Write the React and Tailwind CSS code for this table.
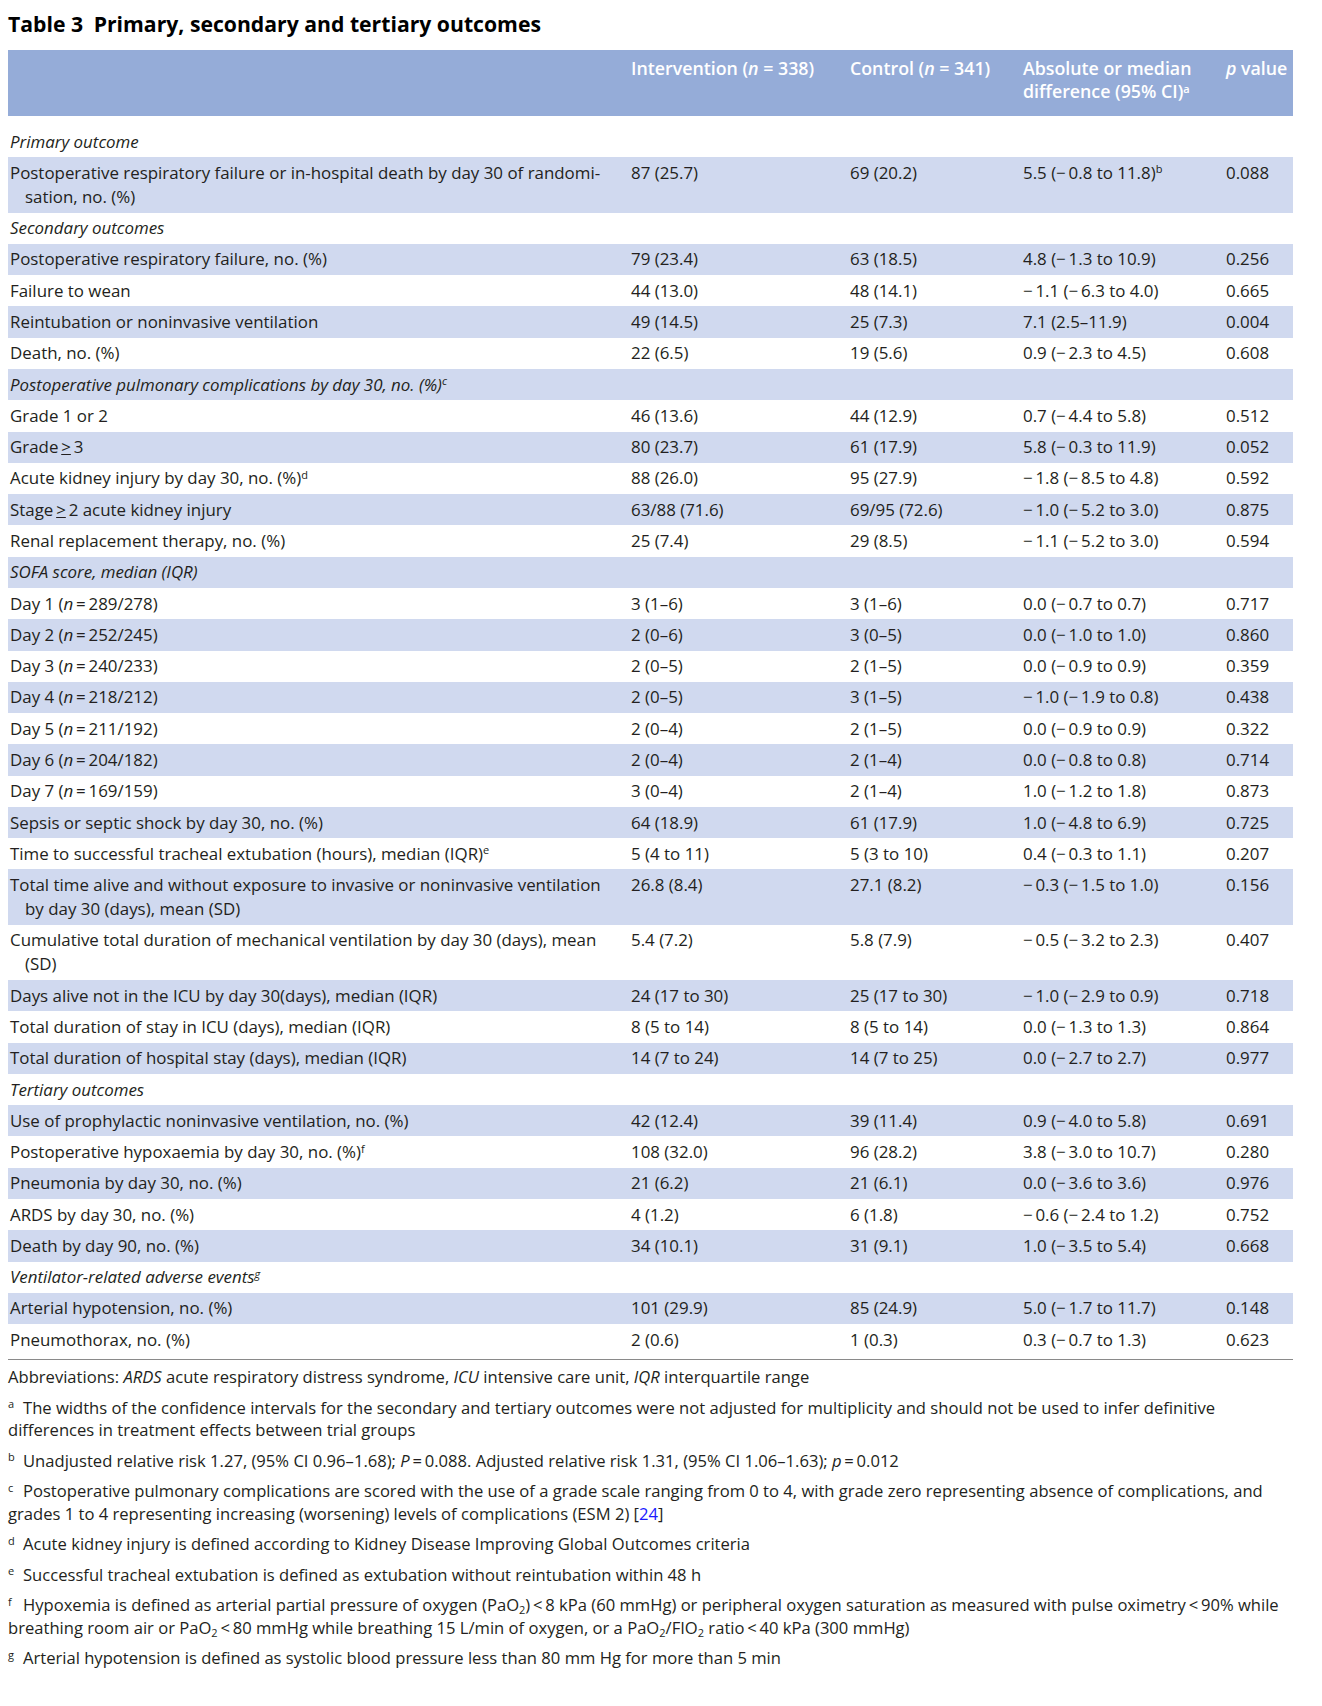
import React from "react";

const m = (s) => s.replace(/−/g, "−\u2009");

const Sup = ({ children }) => <sup className="text-[11px]">{children}</sup>;
const Sub = ({ children }) => <sub className="text-[11px]">{children}</sub>;
const N = ({ v }) => (
  <>
    (<i>n</i>{"\u2009=\u2009"}{v})
  </>
);

// [label, intervention, control, difference, p] ; section rows have only a label
const rows = [
  { section: "Primary outcome" },
  {
    lines: ["Postoperative respiratory failure or in-hospital death by day 30 of randomi-", "sation, no. (%)"],
    cells: ["87 (25.7)", "69 (20.2)", <>{m("5.5 (−0.8 to 11.8)")}<Sup>b</Sup></>, "0.088"],
  },
  { section: "Secondary outcomes" },
  { label: "Postoperative respiratory failure, no. (%)", cells: ["79 (23.4)", "63 (18.5)", "4.8 (−1.3 to 10.9)", "0.256"] },
  { label: "Failure to wean", cells: ["44 (13.0)", "48 (14.1)", "−1.1 (−6.3 to 4.0)", "0.665"] },
  { label: "Reintubation or noninvasive ventilation", cells: ["49 (14.5)", "25 (7.3)", "7.1 (2.5–11.9)", "0.004"] },
  { label: "Death, no. (%)", cells: ["22 (6.5)", "19 (5.6)", "0.9 (−2.3 to 4.5)", "0.608"] },
  { section: <>Postoperative pulmonary complications by day 30, no. (%)<Sup>c</Sup></> },
  { label: "Grade 1 or 2", cells: ["46 (13.6)", "44 (12.9)", "0.7 (−4.4 to 5.8)", "0.512"] },
  { label: <>Grade{"\u2009"}<u>&gt;</u>{"\u2009"}3</>, cells: ["80 (23.7)", "61 (17.9)", "5.8 (−0.3 to 11.9)", "0.052"] },
  { label: <>Acute kidney injury by day 30, no. (%)<Sup>d</Sup></>, cells: ["88 (26.0)", "95 (27.9)", "−1.8 (−8.5 to 4.8)", "0.592"] },
  { label: <>Stage{"\u2009"}<u>&gt;</u>{"\u2009"}2 acute kidney injury</>, cells: ["63/88 (71.6)", "69/95 (72.6)", "−1.0 (−5.2 to 3.0)", "0.875"] },
  { label: "Renal replacement therapy, no. (%)", cells: ["25 (7.4)", "29 (8.5)", "−1.1 (−5.2 to 3.0)", "0.594"] },
  { section: "SOFA score, median (IQR)" },
  { label: <>Day 1 <N v="289/278" /></>, cells: ["3 (1–6)", "3 (1–6)", "0.0 (−0.7 to 0.7)", "0.717"] },
  { label: <>Day 2 <N v="252/245" /></>, cells: ["2 (0–6)", "3 (0–5)", "0.0 (−1.0 to 1.0)", "0.860"] },
  { label: <>Day 3 <N v="240/233" /></>, cells: ["2 (0–5)", "2 (1–5)", "0.0 (−0.9 to 0.9)", "0.359"] },
  { label: <>Day 4 <N v="218/212" /></>, cells: ["2 (0–5)", "3 (1–5)", "−1.0 (−1.9 to 0.8)", "0.438"] },
  { label: <>Day 5 <N v="211/192" /></>, cells: ["2 (0–4)", "2 (1–5)", "0.0 (−0.9 to 0.9)", "0.322"] },
  { label: <>Day 6 <N v="204/182" /></>, cells: ["2 (0–4)", "2 (1–4)", "0.0 (−0.8 to 0.8)", "0.714"] },
  { label: <>Day 7 <N v="169/159" /></>, cells: ["3 (0–4)", "2 (1–4)", "1.0 (−1.2 to 1.8)", "0.873"] },
  { label: "Sepsis or septic shock by day 30, no. (%)", cells: ["64 (18.9)", "61 (17.9)", "1.0 (−4.8 to 6.9)", "0.725"] },
  { label: <>Time to successful tracheal extubation (hours), median (IQR)<Sup>e</Sup></>, cells: ["5 (4 to 11)", "5 (3 to 10)", "0.4 (−0.3 to 1.1)", "0.207"] },
  {
    lines: ["Total time alive and without exposure to invasive or noninvasive ventilation", "by day 30 (days), mean (SD)"],
    cells: ["26.8 (8.4)", "27.1 (8.2)", "−0.3 (−1.5 to 1.0)", "0.156"],
  },
  {
    lines: ["Cumulative total duration of mechanical ventilation by day 30 (days), mean", "(SD)"],
    cells: ["5.4 (7.2)", "5.8 (7.9)", "−0.5 (−3.2 to 2.3)", "0.407"],
  },
  { label: "Days alive not in the ICU by day 30(days), median (IQR)", cells: ["24 (17 to 30)", "25 (17 to 30)", "−1.0 (−2.9 to 0.9)", "0.718"] },
  { label: "Total duration of stay in ICU (days), median (IQR)", cells: ["8 (5 to 14)", "8 (5 to 14)", "0.0 (−1.3 to 1.3)", "0.864"] },
  { label: "Total duration of hospital stay (days), median (IQR)", cells: ["14 (7 to 24)", "14 (7 to 25)", "0.0 (−2.7 to 2.7)", "0.977"] },
  { section: "Tertiary outcomes" },
  { label: "Use of prophylactic noninvasive ventilation, no. (%)", cells: ["42 (12.4)", "39 (11.4)", "0.9 (−4.0 to 5.8)", "0.691"] },
  { label: <>Postoperative hypoxaemia by day 30, no. (%)<Sup>f</Sup></>, cells: ["108 (32.0)", "96 (28.2)", "3.8 (−3.0 to 10.7)", "0.280"] },
  { label: "Pneumonia by day 30, no. (%)", cells: ["21 (6.2)", "21 (6.1)", "0.0 (−3.6 to 3.6)", "0.976"] },
  { label: "ARDS by day 30, no. (%)", cells: ["4 (1.2)", "6 (1.8)", "−0.6 (−2.4 to 1.2)", "0.752"] },
  { label: "Death by day 90, no. (%)", cells: ["34 (10.1)", "31 (9.1)", "1.0 (−3.5 to 5.4)", "0.668"] },
  { section: <>Ventilator-related adverse events<Sup>g</Sup></> },
  { label: "Arterial hypotension, no. (%)", cells: ["101 (29.9)", "85 (24.9)", "5.0 (−1.7 to 11.7)", "0.148"] },
  { label: "Pneumothorax, no. (%)", cells: ["2 (0.6)", "1 (0.3)", "0.3 (−0.7 to 1.3)", "0.623"] },
];

const grid = "grid grid-cols-[623px_219px_173px_203px_1fr]";

function Row({ row, shaded }) {
  const bg = shaded ? "bg-[#d0d9ef]" : "bg-white";
  if (row.section) {
    return (
      <div className={`${grid} ${bg} py-[3.65px] leading-[24px]`}>
        <div className="col-span-5 pl-[2px] italic">{row.section}</div>
      </div>
    );
  }
  return (
    <div className={`${grid} ${bg} py-[3.65px] leading-[24px]`}>
      <div className="pl-[2px]">
        {row.lines ? (
          <>
            <div>{row.lines[0]}</div>
            <div className="pl-[15px]">{row.lines[1]}</div>
          </>
        ) : (
          row.label
        )}
      </div>
      {row.cells.map((c, i) => (
        <div key={i} className="whitespace-nowrap">
          {typeof c === "string" ? m(c) : c}
        </div>
      ))}
    </div>
  );
}

const Note = ({ mark, children }) => (
  <div className="mt-[8px]">
    <span className="inline-block w-[15px]">
      <sup className="text-[11px]">{mark}</sup>
    </span>
    {children}
  </div>
);

export default function App() {
  return (
    <div className="w-[1322px] min-h-[1706px] bg-white text-[16.9px] text-[#231f20] font-['Open_Sans',sans-serif]">
      <div className="pl-[8px] w-[1293px] pt-[10px]">
        <h1 className="text-[21.2px] leading-[28px] font-bold text-black">
          Table 3{"\u2002"}Primary, secondary and tertiary outcomes
        </h1>

        <div className={`${grid} mt-[12px] h-[66px] bg-[#95acd8] pt-[7px] text-[17.8px] leading-[23px] font-semibold text-white`}>
          <div />
          <div className="whitespace-nowrap">
            Intervention (<i>n</i>{" = "}338)
          </div>
          <div className="whitespace-nowrap">
            Control (<i>n</i>{" = "}341)
          </div>
          <div>
            Absolute or median
            <br />
            difference (95% CI)<Sup>a</Sup>
          </div>
          <div className="whitespace-nowrap">
            <i>p</i> value
          </div>
        </div>

        <div className="pt-[10px]">
          {rows.map((r, i) => (
            <Row key={i} row={r} shaded={i % 2 === 1} />
          ))}
        </div>

        <div className="mt-[4px] h-px bg-[#8a8a8a]" />

        <div className="pt-[6px] text-[16.6px] leading-[22.5px]">
          <div>
            Abbreviations: <i>ARDS</i> acute respiratory distress syndrome, <i>ICU</i> intensive care unit, <i>IQR</i> interquartile range
          </div>
          <Note mark="a">
            The widths of the confidence intervals for the secondary and tertiary outcomes were not adjusted for multiplicity and should not be used to infer definitive
            <br />
            differences in treatment effects between trial groups
          </Note>
          <Note mark="b">
            Unadjusted relative risk 1.27, (95% CI 0.96–1.68); <i>P</i>{"\u2009=\u2009"}0.088. Adjusted relative risk 1.31, (95% CI 1.06–1.63); <i>p</i>
            {"\u2009=\u2009"}0.012
          </Note>
          <Note mark="c">
            Postoperative pulmonary complications are scored with the use of a grade scale ranging from 0 to 4, with grade zero representing absence of complications, and
            <br />
            grades 1 to 4 representing increasing (worsening) levels of complications (ESM 2) [<span className="text-[#1a1aff]">24</span>]
          </Note>
          <Note mark="d">Acute kidney injury is defined according to Kidney Disease Improving Global Outcomes criteria</Note>
          <Note mark="e">Successful tracheal extubation is defined as extubation without reintubation within 48 h</Note>
          <Note mark="f">
            Hypoxemia is defined as arterial partial pressure of oxygen (PaO<Sub>2</Sub>){"\u2009<\u2009"}8 kPa (60 mmHg) or peripheral oxygen saturation as measured with pulse oximetry{"\u2009<\u2009"}90% while
            <br />
            breathing room air or PaO<Sub>2</Sub>{"\u2009<\u2009"}80 mmHg while breathing 15 L/min of oxygen, or a PaO<Sub>2</Sub>/FIO<Sub>2</Sub> ratio{"\u2009<\u2009"}40 kPa (300 mmHg)
          </Note>
          <Note mark="g">Arterial hypotension is defined as systolic blood pressure less than 80 mm Hg for more than 5 min</Note>
        </div>
      </div>
    </div>
  );
}
